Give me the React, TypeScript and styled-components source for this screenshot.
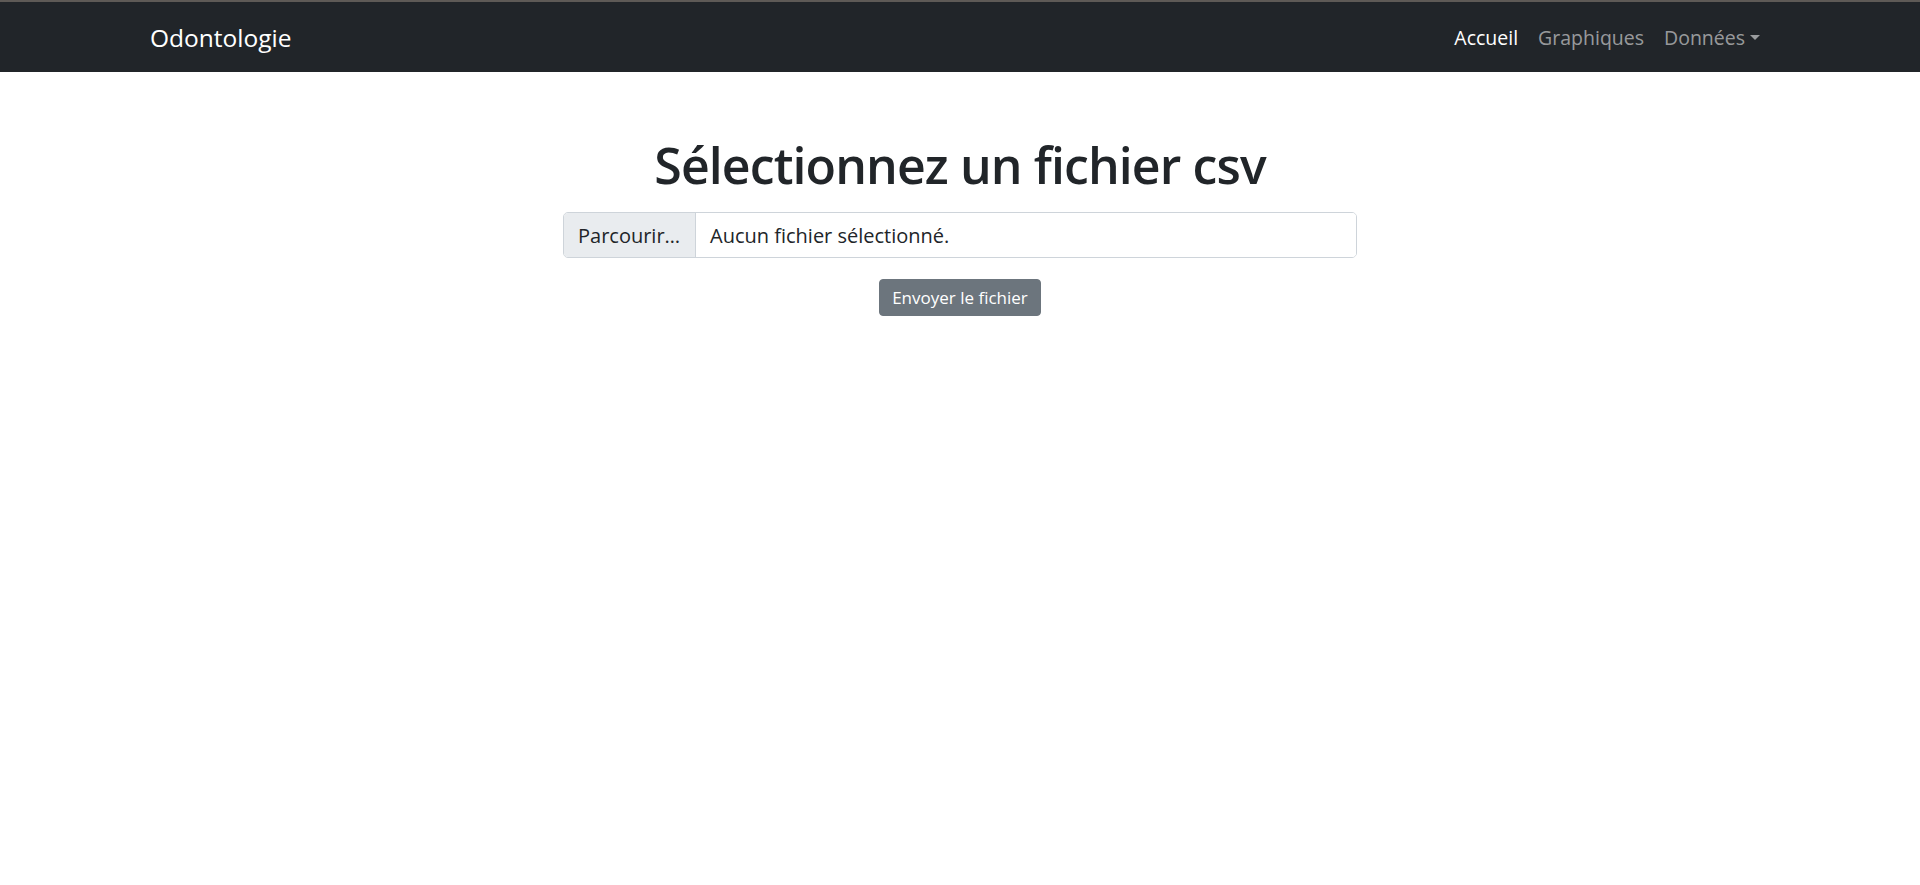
import React from "react";
import styled, { createGlobalStyle } from "styled-components";

const GlobalStyle = createGlobalStyle`
  html, body {
    margin: 0;
    padding: 0;
    background: #ffffff;
    font-family: "Open Sans", "Noto Sans", sans-serif;
    color: #212529;
  }
  * { box-sizing: border-box; }
`;

const Navbar = styled.nav`
  background: #212529;
  border-top: 2px solid #5e5a56;
  padding: 11px 0 9px;
`;

const Container = styled.div`
  max-width: 1650px;
  margin: 0 auto;
  padding: 0 15px;
`;

const NavInner = styled(Container)`
  display: flex;
  align-items: center;
  justify-content: space-between;
`;

const Brand = styled.a`
  font-size: 24.5px;
  line-height: 37.5px;
  padding: 6.25px 0;
  color: #ffffff;
  text-decoration: none;
`;

const NavList = styled.ul`
  display: flex;
  list-style: none;
  margin: 0;
  padding: 0;
`;

const NavLink = styled.a<{ $active?: boolean }>`
  display: block;
  padding: 10px;
  font-size: 19.5px;
  line-height: 30px;
  color: ${(p) => (p.$active ? "#ffffff" : "rgba(255,255,255,0.55)")};
  text-decoration: none;
  cursor: pointer;
`;

const Caret = styled.span`
  display: inline-block;
  margin-left: 0.255em;
  vertical-align: 0.255em;
  border-top: 0.3em solid;
  border-right: 0.3em solid transparent;
  border-left: 0.3em solid transparent;
  border-bottom: 0;
`;

const Main = styled(Container)`
  display: flex;
  flex-direction: column;
  align-items: center;
  padding-top: 63px;
`;

const Title = styled.h1`
  margin: 0 0 17px;
  font-size: 50px;
  font-weight: 600;
  letter-spacing: -0.9px;
  line-height: 1.2;
  color: #212529;
  text-align: center;
`;

const FileGroup = styled.label`
  display: flex;
  width: 794px;
  height: 46px;
  border: 1px solid #ced4da;
  border-radius: 5px;
  overflow: hidden;
  font-size: 20px;
  color: #212529;
  cursor: pointer;
`;

const BrowseBox = styled.span`
  display: flex;
  align-items: center;
  padding: 0 14px;
  background: #e9ecef;
  border-right: 1px solid #ced4da;
  width: 132px;
  white-space: nowrap;
`;

const FileName = styled.span`
  display: flex;
  align-items: center;
  padding: 0 14px;
  flex: 1;
  background: #ffffff;
`;

const SubmitButton = styled.button`
  margin-top: 21px;
  height: 37px;
  padding: 0 12px;
  font-family: inherit;
  font-size: 17px;
  color: #ffffff;
  background: #6c757d;
  border: 1px solid #6c757d;
  border-radius: 4px;
  cursor: pointer;
`;

export default function App() {
  return (
    <>
      <GlobalStyle />
      <Navbar>
        <NavInner>
          <Brand href="#">Odontologie</Brand>
          <NavList>
            <li>
              <NavLink $active>Accueil</NavLink>
            </li>
            <li>
              <NavLink>Graphiques</NavLink>
            </li>
            <li>
              <NavLink>
                Données
                <Caret />
              </NavLink>
            </li>
          </NavList>
        </NavInner>
      </Navbar>
      <Main>
        <Title>Sélectionnez un fichier csv</Title>
        <FileGroup>
          <BrowseBox>Parcourir…</BrowseBox>
          <FileName>Aucun fichier sélectionné.</FileName>
        </FileGroup>
        <SubmitButton>Envoyer le fichier</SubmitButton>
      </Main>
    </>
  );
}
